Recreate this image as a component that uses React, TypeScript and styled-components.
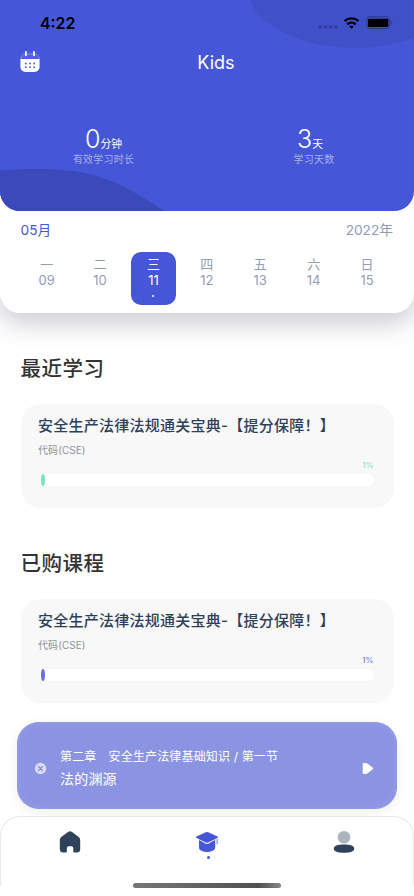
import React from 'react';
import styled, { createGlobalStyle } from 'styled-components';

const GlobalStyle = createGlobalStyle`
  * { box-sizing: border-box; }
  body { margin: 0; background: #fff; overflow: hidden; }
`;

const Screen = styled.main`
  width: 414px;
  height: 896px;
  overflow: hidden;
  display: flex;
  flex-direction: column;
  background: #fff;
  font-family: Inter, 'Noto Sans CJK SC', sans-serif;
`;

const TopCard = styled.section`
  flex: none;
  height: 313px;
  border-radius: 0 0 20px 20px;
  background: #fff;
  box-shadow: 0 10px 26px rgba(30, 30, 60, 0.23);
`;

const Hero = styled.header`
  position: relative;
  height: 211px;
  overflow: hidden;
  border-radius: 0 0 20px 20px;
  background: #4557d7;
  color: #fff;
`;

const Waves = styled.svg`
  position: absolute;
  inset: 0;
`;

const HeroBody = styled.div`
  position: relative;
  display: flex;
  flex-direction: column;
`;

const StatusBar = styled.div`
  height: 44px;
  padding: 2px 14px 0 40px;
  display: flex;
  align-items: center;
  justify-content: space-between;
  color: #000;
  font-size: 15.8px;
  font-weight: 600;
  line-height: 21px;
`;

const TitleBar = styled.div`
  height: 36px;
  padding: 0 20px;
  display: grid;
  grid-template-columns: 20px 1fr 20px;
  align-items: center;
`;

const Title = styled.h1`
  margin: 0;
  text-align: center;
  font-size: 18px;
  line-height: 22px;
  font-weight: 400;
  padding: 1px 0 0 18px;
`;

const Stats = styled.div`
  display: grid;
  grid-template-columns: 207px 214px;
  margin-top: 43px;
`;

const Stat = styled.div`
  display: flex;
  flex-direction: column;
  align-items: center;
`;

const StatValue = styled.div<{ $shift: number }>`
  display: flex;
  align-items: baseline;
  height: 31px;
  line-height: 32px;
  font-size: 25px;
  font-weight: 300;
  margin-left: ${(p) => p.$shift}px;
`;

const Unit = styled.span`
  font-size: 10.8px;
  font-weight: 400;
`;

const StatLabel = styled.div`
  font-size: 10px;
  letter-spacing: 0.2px;
  line-height: 11px;
  color: #a5aeec;
`;

const MonthRow = styled.div`
  height: 41px;
  padding: 9px 21px 0 20.5px;
  display: flex;
  justify-content: space-between;
  font-size: 13.7px;
  line-height: 20px;
  color: #8f9bb9;
`;

const Month = styled.span`
  color: #4557d7;
`;

const Week = styled.div`
  display: grid;
  grid-template-columns: repeat(7, 53.4px);
  justify-items: center;
  padding-left: 20px;
`;

const Day = styled.div<{ $active?: boolean }>`
  width: 45px;
  height: 53px;
  padding-top: 4px;
  border-radius: 10px;
  display: flex;
  flex-direction: column;
  align-items: center;
  font-size: 13px;
  line-height: 16px;
  background: ${(p) => (p.$active ? '#4557d7' : 'transparent')};
  color: ${(p) => (p.$active ? '#fff' : '#929db8')};
`;

const Dot = styled.i<{ $color: string; $size: number }>`
  width: ${(p) => p.$size}px;
  height: ${(p) => p.$size}px;
  border-radius: 50%;
  background: ${(p) => p.$color};
`;

const DayDot = styled(Dot)`
  margin-top: 7px;
`;

const TabDot = styled(Dot)`
  margin: 1.5px 0 0 2px;
`;

const Content = styled.div`
  flex: none;
  height: 409px;
  padding: 39.5px 20.5px 0;
`;

const Heading = styled.h2`
  height: 51px;
  margin: 0;
  padding-top: 1px;
  font-size: 20.5px;
  letter-spacing: 0.5px;
  line-height: 30px;
  font-weight: 500;
  color: #333;
`;

const Course = styled.article`
  height: 104.5px;
  margin-bottom: 39.5px;
  padding: 11px 20px 0 17.5px;
  border-radius: 20px;
  background: #f8f8f8;
`;

const CourseTitle = styled.h3`
  margin: 0;
  font-size: 15px;
  letter-spacing: 0.25px;
  line-height: 22px;
  font-weight: 500;
  color: #2d4059;
  white-space: nowrap;
`;

const CourseCode = styled.div`
  margin-top: 6px;
  font-size: 10px;
  line-height: 15px;
  letter-spacing: 0.08px;
  color: #8c939e;
`;

const Percent = styled.div<{ $color: string }>`
  margin-top: 2px;
  text-align: right;
  font-size: 8px;
  font-weight: 500;
  line-height: 10px;
  color: ${(p) => p.$color};
`;

const Track = styled.div`
  height: 12px;
  margin: 4px 0 0 3px;
  border-radius: 6px;
  background: #fff;
`;

const Fill = styled.div<{ $color: string }>`
  width: 3.5px;
  height: 12px;
  border-radius: 50%;
  background: ${(p) => p.$color};
`;

const Player = styled.section`
  flex: none;
  height: 87px;
  margin: 0 17px 7px;
  padding: 6px 22px 0 17px;
  display: flex;
  align-items: center;
  border-radius: 22px;
  color: #fff;
  background: #8b94e2;
  box-shadow: 0 3px 12px rgba(0, 0, 0, 0.07), inset 0 0 9px #969fe8;
`;

const PlayerText = styled.div`
  flex: 1;
  margin: 1px 0 0 13px;
`;

const Chapter = styled.div`
  font-size: 12px;
  letter-spacing: 0.15px;
  line-height: 20px;
  white-space: pre;
`;

const Lesson = styled.div`
  font-size: 14px;
  letter-spacing: 0.2px;
  line-height: 24px;
`;

const TabBar = styled.nav`
  flex: none;
  height: 70px;
  border: 1px solid #e8e8e8;
  border-bottom: 0;
  border-radius: 20px 20px 0 0;
  background: #fff;
  display: grid;
  grid-template-columns: repeat(3, 137px);
  justify-content: center;
`;

const Tab = styled.div`
  display: flex;
  flex-direction: column;
  align-items: center;
  padding-top: 13px;
`;

const HomeBar = styled.div`
  flex: none;
  width: 148px;
  height: 5px;
  margin: -3.5px auto 0;
  border-radius: 3px;
  background: linear-gradient(90deg, #777, #606060 50%, #505050 85%, #888);
  z-index: 1;
`;

const CalendarIcon = () => (
  <svg width="20" height="22" viewBox="0 0 20 22">
    <rect x="0.5" y="2.5" width="19" height="18" rx="5" fill="#8792e5" />
    <rect x="1.4" y="3.6" width="17.2" height="7" rx="3" fill="#5362da" />
    <path d="M0.5 8h19v8a5 5 0 0 1-5 5h-9a5 5 0 0 1-5-5z" fill="#fff" />
    <path d="M5.9 1v3.3M14 1v3.3" stroke="#fff" strokeWidth="1.8" strokeLinecap="round" />
    <g fill="#4557d7">
      {[5.7, 10, 14.2].map((x) => (
        <React.Fragment key={x}>
          <circle cx={x} cy="12.5" r="0.9" />
          <circle cx={x} cy="16.2" r="0.9" />
        </React.Fragment>
      ))}
    </g>
  </svg>
);

const SignalIcons = () => (
  <svg width="82" height="16" viewBox="318 15 82 16">
    <g fill="#303e9c">
      {[318.8, 323.9, 328.9, 333.9].map((x) => (
        <rect key={x} x={x} y="25.2" width="3.3" height="3.3" rx="1" />
      ))}
    </g>
    <g fill="none" stroke="#000" strokeWidth="2.4">
      <path d="M344.5 21.1a10.3 10.3 0 0 1 14 0" />
      <path d="M347.2 24.3a6.4 6.4 0 0 1 8.6 0" />
    </g>
    <path d="M349.3 26.4a3.3 3.3 0 0 1 4.4 0l-2.2 2.3z" />
    <rect x="366.7" y="16.8" width="23" height="11.7" rx="3.2" fill="none" stroke="#2a3687" />
    <rect x="368" y="18.8" width="20.3" height="8.2" rx="1.3" />
    <path d="M391.2 20.8c1.6.8 1.6 3.2 0 4z" fill="#2a3687" />
  </svg>
);

const CloseIcon = () => (
  <svg width="13" height="13" viewBox="0 0 13 13">
    <circle cx="6.5" cy="6.5" r="5.7" fill="#d7daf6" />
    <path d="m4.6 4.6 3.8 3.8m0-3.8L4.6 8.4" stroke="#7e88dc" strokeWidth="1.3" strokeLinecap="round" />
  </svg>
);

const PlayIcon = () => (
  <svg width="13" height="13" viewBox="0 0 13 13">
    <path d="M1.5 1h2.2q.8 0 1.6.5l5.3 3.9q1.4 1.1 0 2.2l-5.3 3.9q-.8.5-1.6.5H1.5q-.8 0-.8-.8V1.8q0-.8.8-.8z" fill="#fff" />
  </svg>
);

const HomeIcon = () => (
  <svg width="22" height="24" viewBox="0 0 22 24">
    <path d="M9 1.9q2-1.5 4 0l6.4 4.8q1.8 1.3 1.8 3.5v8.7q0 3.5-3.5 3.5h-2.4q-1 0-1-1v-3.1q0-2-2-2h-2.5q-2 0-2 2v3.1q0 1-1 1H4.3q-3.5 0-3.5-3.5v-8.7q0-2.2 1.8-3.5z" fill="#2e4259" />
  </svg>
);

const StudyIcon = () => (
  <svg width="24" height="24" viewBox="0 0 24 24">
    <path d="M4 9l6.700 4.600q1.300.5 2.600 0L20.200 9v8.600q0 2.300-2.200 2.900-6 3.200-12 0Q4 19.900 4 17.600z" fill="#4557d7" />
    <path d="M10.7 2.200q1.300-.6 2.600 0l9.200 4.200q1.200.8 0 1.500L13.300 12.500q-1.300.6-2.600 0L1.500 7.900q-1.200-.7 0-1.500z" fill="#4557d7" />
    <path d="M1.300 8.300l9.400 4.900q1.300.6 2.600 0l9.400-4.900" fill="none" stroke="#fff" strokeWidth="0.7" />
    <path d="M22.200 9.600v3.800" stroke="#a4adec" strokeWidth="1.8" strokeLinecap="round" />
  </svg>
);

const ProfileIcon = () => (
  <svg width="22" height="24" viewBox="0 0 22 24">
    <circle cx="11" cy="7.2" r="6.3" fill="#adb4be" />
    <path d="M.8 18.7c0-2.7 4-4.1 10.2-4.1s10.2 1.4 10.2 4.1-4 4.1-10.2 4.1S.8 21.4.8 18.7z" fill="#2e4259" />
  </svg>
);

const days = [
  ['一', '09'],
  ['二', '10'],
  ['三', '11'],
  ['四', '12'],
  ['五', '13'],
  ['六', '14'],
  ['日', '15'],
];

const CourseCard = ({ text, bar }: { text: string; bar: string }) => (
  <Course>
    <CourseTitle>安全生产法律法规通关宝典-【提分保障！】</CourseTitle>
    <CourseCode>代码(CSE)</CourseCode>
    <Percent $color={text}>1%</Percent>
    <Track>
      <Fill $color={bar} />
    </Track>
  </Course>
);

export default function App() {
  return (
    <Screen>
      <GlobalStyle />
      <TopCard>
        <Hero>
          <Waves width="414" height="211">
            <path d="M250.5 0C253 14 271 28 299 39C337 52 378 50 414 38V0z" fill="#4050c8" />
            <path d="M0 170.5C31 168 65 168 89 174C117 180 144 198 165 211H0z" fill="#3b49ba" />
          </Waves>
          <HeroBody>
            <StatusBar>
              <span>4:22</span>
              <SignalIcons />
            </StatusBar>
            <TitleBar>
              <CalendarIcon />
              <Title>Kids</Title>
            </TitleBar>
            <Stats>
              <Stat>
                <StatValue $shift={0}>
                  0<Unit>分钟</Unit>
                </StatValue>
                <StatLabel>有效学习时长</StatLabel>
              </Stat>
              <Stat>
                <StatValue $shift={-8}>
                  3<Unit>天</Unit>
                </StatValue>
                <StatLabel>学习天数</StatLabel>
              </Stat>
            </Stats>
          </HeroBody>
        </Hero>
        <MonthRow>
          <Month>05月</Month>
          <span>2022年</span>
        </MonthRow>
        <Week>
          {days.map(([name, date]) => (
            <Day key={date} $active={date === '11'}>
              <span>{name}</span>
              <span>{date}</span>
              {date === '11' && <DayDot $color="#fff" $size={2} />}
            </Day>
          ))}
        </Week>
      </TopCard>
      <Content>
        <Heading>最近学习</Heading>
        <CourseCard text="#8ee2c6" bar="#79e3c0" />
        <Heading>已购课程</Heading>
        <CourseCard text="#7480e6" bar="#6471e4" />
      </Content>
      <Player>
        <CloseIcon />
        <PlayerText>
          <Chapter>第二章　安全生产法律基础知识 / 第一节</Chapter>
          <Lesson>法的渊源</Lesson>
        </PlayerText>
        <PlayIcon />
      </Player>
      <TabBar>
        <Tab>
          <HomeIcon />
        </Tab>
        <Tab>
          <StudyIcon />
          <TabDot $color="#4557d7" $size={3} />
        </Tab>
        <Tab>
          <ProfileIcon />
        </Tab>
      </TabBar>
      <HomeBar />
    </Screen>
  );
}
